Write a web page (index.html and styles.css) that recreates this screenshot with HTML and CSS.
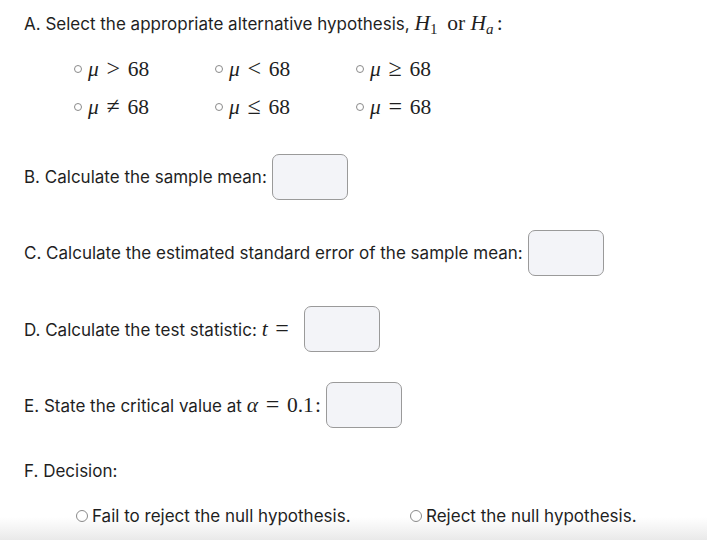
FILE: index.html
```html
<!DOCTYPE html>
<html lang="en">
<head>
<meta charset="utf-8">
<title>Hypothesis test</title>
<link rel="stylesheet" href="styles.css">
</head>
<body>
<div class="page">
  <p class="line qa">A. Select the appropriate alternative hypothesis, <span class="m"><i>H</i><sub>1</sub><span class="rm">or</span><i>H</i><sub><i>a</i></sub><span class="colon">:</span></span></p>

  <div class="opts">
    <label class="opt"><span class="radio"></span><span class="m"><i>μ</i><span class="rel">&gt;</span>68</span></label>
    <label class="opt"><span class="radio"></span><span class="m"><i>μ</i><span class="rel">&lt;</span>68</span></label>
    <label class="opt"><span class="radio"></span><span class="m"><i>μ</i><span class="rel">≥</span>68</span></label>
    <label class="opt"><span class="radio"></span><span class="m"><i>μ</i><span class="rel">≠</span>68</span></label>
    <label class="opt"><span class="radio"></span><span class="m"><i>μ</i><span class="rel">≤</span>68</span></label>
    <label class="opt"><span class="radio"></span><span class="m"><i>μ</i><span class="rel">=</span>68</span></label>
  </div>

  <div class="row rb"><span class="line">B. Calculate the sample mean:</span><span class="box"></span></div>
  <div class="row"><span class="line">C. Calculate the estimated standard error of the sample mean:</span><span class="box"></span></div>
  <div class="row"><span class="line">D. Calculate the test statistic: <span class="m"><i>t</i><span class="rel">=</span></span></span><span class="box bd"></span></div>
  <div class="row"><span class="line">E. State the critical value at <span class="m"><i>α</i><span class="rel">=</span>0.1<span class="colon2">:</span></span></span><span class="box"></span></div>

  <p class="line dec">F. Decision:</p>
  <div class="decs">
    <label class="dopt"><span class="radio big"></span><span>Fail to reject the null hypothesis.</span></label>
    <label class="dopt"><span class="radio big"></span><span>Reject the null hypothesis.</span></label>
  </div>
</div>
</body>
</html>
```

FILE: styles.css
```css
html, body {
  margin: 0;
  padding: 0;
  background: #ffffff;
}
body {
  font-family: Inter, "Noto Sans", "Liberation Sans", sans-serif;
  font-size: 17px;
  color: #1f1f1f;
}
.page {
  box-sizing: border-box;
  width: 707px;
  height: 540px;
  padding: 11px 0 0 24px;
  background: linear-gradient(to bottom, #ffffff 0, #ffffff 517px, #f1f1f1 532px, #e9e9e9 540px);
  overflow: hidden;
}
.line {
  margin: 0;
  line-height: 24px;
  white-space: nowrap;
}
.m {
  font-family: "Liberation Serif", "Times New Roman", serif;
  font-size: 21.5px;
  white-space: nowrap;
}
.m i {
  font-style: italic;
}
.m sub {
  font-size: 0.7em;
  vertical-align: -0.25em;
  line-height: 0;
}
.rm {
  margin: 0 0.25em 0 0.45em;
}
.colon {
  margin-left: 0.15em;
}
.colon2 {
  margin-left: 0.05em;
}
.rel {
  font-size: 1.12em;
  line-height: 1;
  margin: 0 0.32em;
}
.opts {
  display: grid;
  grid-template-columns: 141px 141px 141px;
  grid-auto-rows: 30px;
  row-gap: 8px;
  margin: 18px 0 0 50px;
}
.opt {
  display: flex;
  align-items: center;
  gap: 6px;
}
.radio {
  box-sizing: border-box;
  width: 8px;
  height: 8px;
  border: 1px solid #8a8a8a;
  border-radius: 50%;
  flex: none;
}
.radio.big {
  width: 12px;
  height: 12px;
}
.row {
  display: flex;
  align-items: center;
  gap: 5px;
  height: 46px;
  margin-top: 30px;
}
.row.rb {
  margin-top: 32px;
}
.box {
  box-sizing: border-box;
  width: 76px;
  height: 46px;
  border: 1px solid #9a9a9a;
  border-radius: 7px;
  background: #f3f4f8;
  flex: none;
}
.box.bd {
  margin-left: 2px;
}
.dec {
  margin-top: 31px;
}
.decs {
  display: grid;
  grid-template-columns: 334px auto;
  margin: 21px 0 0 52px;
  height: 24px;
}
.dopt {
  display: flex;
  align-items: center;
  gap: 4px;
  line-height: 24px;
  white-space: nowrap;
}
```
